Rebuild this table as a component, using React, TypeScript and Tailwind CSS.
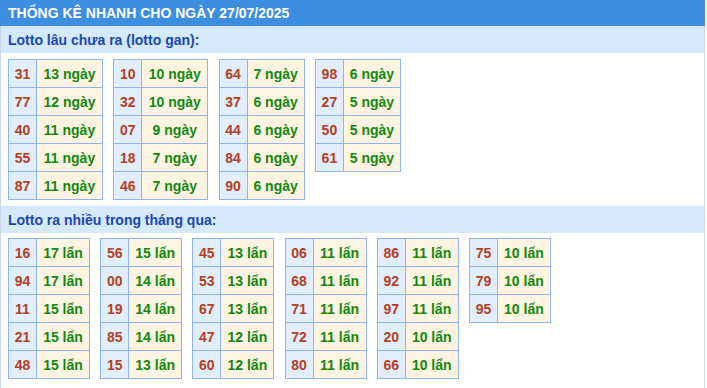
const GAN: [string, string][][] = [
  [['31', '13'], ['77', '12'], ['40', '11'], ['55', '11'], ['87', '11']],
  [['10', '10'], ['32', '10'], ['07', '9'], ['18', '7'], ['46', '7']],
  [['64', '7'], ['37', '6'], ['44', '6'], ['84', '6'], ['90', '6']],
  [['98', '6'], ['27', '5'], ['50', '5'], ['61', '5']],
]

const NHIEU: [string, string][][] = [
  [['16', '17'], ['94', '17'], ['11', '15'], ['21', '15'], ['48', '15']],
  [['56', '15'], ['00', '14'], ['19', '14'], ['85', '14'], ['15', '13']],
  [['45', '13'], ['53', '13'], ['67', '13'], ['47', '12'], ['60', '12']],
  [['06', '11'], ['68', '11'], ['71', '11'], ['72', '11'], ['80', '11']],
  [['86', '11'], ['92', '11'], ['97', '11'], ['20', '10'], ['66', '10']],
  [['75', '10'], ['79', '10'], ['95', '10']],
]

// column widths of the count cell per table in the "gan" block
const GAN_W = ['w-[66px]', 'w-[66px]', 'w-[57px]', 'w-[57px]']

function StatTable({ rows, unit, countW }: { rows: [string, string][]; unit: string; countW: string }) {
  return (
    <div className="border-l border-t border-[#8fb4ee] self-start">
      {rows.map(([num, count]) => (
        <div key={num} className="flex h-[28px]">
          <div className="w-[28px] flex items-center justify-center bg-[#e1eefd] text-[#b5401d] border-r border-b border-[#8fb4ee]">
            {num}
          </div>
          <div className={`${countW} flex items-center justify-center bg-[#fff3e1] text-[#0f8a10] border-r border-b border-[#8fb4ee]`}>
            {count} {unit}
          </div>
        </div>
      ))}
    </div>
  )
}

function SectionTitle({ children }: { children: React.ReactNode }) {
  return (
    <div className="h-[27px] flex items-center pl-[7px] bg-[#d6e9fc] text-[#1a47b0] text-[14px] font-bold">
      {children}
    </div>
  )
}

export default function App() {
  return (
    <div className="w-[705px] bg-white font-['Liberation_Sans',Arial,sans-serif] text-[14px] font-bold leading-none">
      <div className="h-[26px] flex items-center pl-[8px] bg-[#3d8ee0] text-white text-[14px] font-bold">
        THỐNG KÊ NHANH CHO NGÀY 27/07/2025
      </div>

      <div className="border-x border-[#c8d7ea] pb-[10px]">
        <SectionTitle>Lotto lâu chưa ra (lotto gan):</SectionTitle>
        <div className="flex gap-[10.3px] pl-[7px] pt-[6px]">
          {GAN.map((rows, i) => (
            <StatTable key={i} rows={rows} unit="ngày" countW={GAN_W[i]} />
          ))}
        </div>

        <div className="mt-[6px]">
          <SectionTitle>Lotto ra nhiều trong tháng qua:</SectionTitle>
        </div>
        <div className="flex gap-[10.2px] pl-[7px] pt-[5px]">
          {NHIEU.map((rows, i) => (
            <StatTable key={i} rows={rows} unit="lẩn" countW="w-[53px]" />
          ))}
        </div>
      </div>
    </div>
  )
}
